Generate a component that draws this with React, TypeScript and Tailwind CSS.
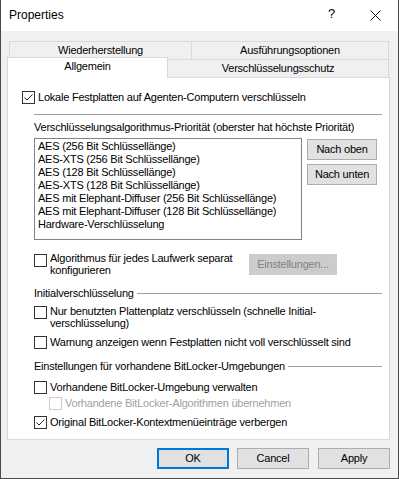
import React from "react";

function Box({ checked = false, disabled = false }: { checked?: boolean; disabled?: boolean }) {
  return (
    <div
      className={`w-[13px] h-[13px] shrink-0 border bg-white flex items-center justify-center ${
        disabled ? "border-[#cccccc]" : "border-[#333333]"
      }`}
    >
      {checked && (
        <svg width="11" height="11" viewBox="0 0 11 11">
          <path d="M1.5 5.5 L4 8 L9.5 2.5" fill="none" stroke="#222" strokeWidth="1" />
        </svg>
      )}
    </div>
  );
}

function Btn({ children, w, ok = false }: { children: React.ReactNode; w: string; ok?: boolean }) {
  return (
    <div
      className={`${w} h-[21px] flex items-center justify-center bg-[#e1e1e1] ${
        ok ? "border-2 border-[#0078d7]" : "border border-[#adadad]"
      }`}
    >
      {children}
    </div>
  );
}

const items = [
  "AES (256 Bit Schlüssellänge)",
  "AES-XTS (256 Bit Schlüssellänge)",
  "AES (128 Bit Schlüssellänge)",
  "AES-XTS (128 Bit Schlüssellänge)",
  "AES mit Elephant-Diffuser (256 Bit Schlüssellänge)",
  "AES mit Elephant-Diffuser (128 Bit Schlüssellänge)",
  "Hardware-Verschlüsselung",
];

export default function App() {
  return (
    <div className="w-[399px] h-[479px] bg-[#f0f0f0] border-l border-r border-b border-[#4a4a4a] flex flex-col font-['Liberation_Sans',Arial,sans-serif] text-[11px] tracking-[-0.22px] text-black overflow-hidden">
      {/* Title bar */}
      <div className="h-[31px] bg-white flex items-center shrink-0 relative tracking-normal">
        <span className="ml-[8px] text-[12px] leading-[16px] mt-[-1px]">Properties</span>
        <span className="absolute left-[327px] top-[6px] text-[13px] leading-[16px]">?</span>
        <svg className="absolute left-[369px] top-[10px]" width="11" height="11" viewBox="0 0 11 11">
          <path d="M0.5 0.5 L10.5 10.5 M10.5 0.5 L0.5 10.5" stroke="#111" strokeWidth="1" />
        </svg>
      </div>

      {/* Tabs */}
      <div className="mt-[10px] flex ml-[8px] h-[18px]">
        <div className="w-[183px] h-[18px] border-t border-l border-r border-[#d9d9d9] flex items-center justify-center leading-[13px]">
          Wiederherstellung
        </div>
        <div className="w-[198px] h-[18px] ml-[-1px] border-t border-l border-r border-[#d9d9d9] flex items-center justify-center leading-[13px]">
          Ausführungsoptionen
        </div>
      </div>
      <div className="mt-[-2px] flex items-end ml-[6px] h-[20px]">
        <div className="relative z-10 w-[161px] h-[21px] mb-[-1px] bg-white border-t border-l border-r border-[#d9d9d9] flex justify-center pt-[2px] leading-[13px]">
          Allgemein
        </div>
        <div className="w-[222px] h-[18px] ml-[-1px] border-t border-l border-r border-[#d9d9d9] flex items-center justify-center leading-[13px]">
          Verschlüsselungsschutz
        </div>
      </div>

      {/* Panel */}
      <div className="ml-[6px] w-[383px] h-[363px] bg-white border border-[#d9d9d9] flex flex-col shrink-0">
        <div className="mt-[13px] ml-[14px] h-[13px] flex items-center gap-[3px] leading-[13px]">
          <Box checked />
          <span>Lokale Festplatten auf Agenten-Computern verschlüsseln</span>
        </div>

        <div className="ml-[26px] w-[348px] flex flex-col">
          <div className="mt-[10px] h-px bg-[#a0a0a0]" />
          <div className="mt-[6px] leading-[13px]">
            Verschlüsselungsalgorithmus-Priorität (oberster hat höchste Priorität)
          </div>
          <div className="mt-[4px] flex">
            <div className="w-[268px] h-[102px] border border-[#828282] pl-[3px] pt-[1px] flex flex-col leading-[13px]">
              {items.map((t) => (
                <div key={t}>{t}</div>
              ))}
            </div>
            <div className="ml-[5px] mt-px flex flex-col gap-[4px]">
              <Btn w="w-[70px]">Nach oben</Btn>
              <Btn w="w-[70px]">Nach unten</Btn>
            </div>
          </div>

          <div className="mt-[12px] flex items-start">
            <div className="mt-[2px]">
              <Box />
            </div>
            <div className="ml-[3px] w-[199px] leading-[12px]">
              Algorithmus für jedes Laufwerk separat
              <br />
              konfigurieren
            </div>
            <div className="mt-[2px] w-[88px] h-[21px] bg-[#cccccc] border border-[#cccccc] text-[#838383] flex items-center justify-center">
              Einstellungen...
            </div>
          </div>

          <div className="mt-[11px] flex items-center gap-[3px] leading-[13px]">
            <span>Initialverschlüsselung</span>
            <div className="flex-1 h-px bg-[#a0a0a0]" />
          </div>

          <div className="mt-[5px] flex items-start">
            <div className="mt-[1px]">
              <Box />
            </div>
            <div className="ml-[3px] leading-[12px]">
              Nur benutzten Plattenplatz verschlüsseln (schnelle Initial-
              <br />
              verschlüsselung)
            </div>
          </div>

          <div className="mt-[7px] flex items-center gap-[3px] h-[13px] leading-[13px]">
            <Box />
            <span>Warnung anzeigen wenn Festplatten nicht voll verschlüsselt sind</span>
          </div>

          <div className="mt-[11px] flex items-center gap-[3px] leading-[13px]">
            <span>Einstellungen für vorhandene BitLocker-Umgebungen</span>
            <div className="flex-1 h-px bg-[#a0a0a0]" />
          </div>

          <div className="mt-[8px] flex items-center gap-[3px] h-[13px] leading-[13px]">
            <Box />
            <span>Vorhandene BitLocker-Umgebung verwalten</span>
          </div>

          <div className="mt-[3px] ml-[15px] flex items-center gap-[3px] h-[13px] leading-[13px] text-[#a0a0a0]">
            <Box disabled />
            <span>Vorhandene BitLocker-Algorithmen übernehmen</span>
          </div>

          <div className="mt-[6px] flex items-center gap-[3px] h-[13px] leading-[13px]">
            <Box checked />
            <span>Original BitLocker-Kontextmenüeinträge verbergen</span>
          </div>
        </div>
      </div>

      {/* Bottom buttons */}
      <div className="mt-[8px] ml-[156px] flex gap-[8px]">
        <Btn w="w-[72px]" ok>
          OK
        </Btn>
        <Btn w="w-[72px]">Cancel</Btn>
        <div className="ml-px">
          <Btn w="w-[72px]">Apply</Btn>
        </div>
      </div>
    </div>
  );
}
